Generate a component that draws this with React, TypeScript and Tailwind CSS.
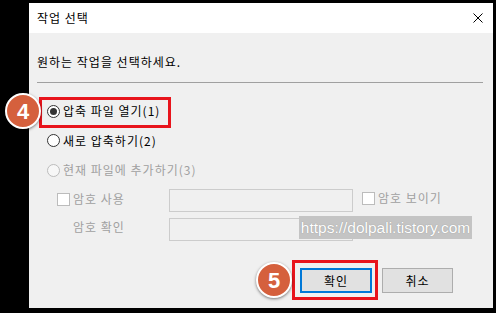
import React from "react";

const Radio: React.FC<{ checked?: boolean; disabled?: boolean }> = ({
  checked,
  disabled,
}) => (
  <span
    className={`w-[13px] h-[13px] rounded-full border flex items-center justify-center shrink-0 ${
      disabled ? "border-[#bcbcbc] bg-[#f7f7f7]" : "border-[#333333] bg-white"
    }`}
  >
    {checked && <span className="w-[7px] h-[7px] rounded-full bg-[#333333]" />}
  </span>
);

const Check: React.FC = () => (
  <span className="w-[13px] h-[13px] border border-[#bcbcbc] bg-white shrink-0" />
);

const Badge: React.FC<{ n: string; className: string }> = ({ n, className }) => (
  <div
    className={`absolute w-[36px] h-[36px] rounded-full bg-[#d5603d] border-[2px] border-white shadow-[0_1px_3px_rgba(0,0,0,0.5)] flex items-center justify-center text-white font-bold text-[22px] tracking-normal font-['Liberation_Sans',Arial,sans-serif] ${className}`}
  >
    {n}
  </div>
);

const App: React.FC = () => {
  return (
    <div className="relative w-[496px] h-[313px] bg-black pt-[3px] pl-[29px] overflow-hidden font-['Noto_Sans_CJK_KR',sans-serif] text-[12px] tracking-[1px] text-black">
      <div className="w-[464px] h-[305px] flex flex-col bg-[#f0f0f0]">
        {/* title bar */}
        <div className="h-[30px] bg-white flex items-center justify-between pl-[8px] pr-[10px]">
          <span className="leading-[16px]">작업 선택</span>
          <svg width="10" height="10" viewBox="0 0 10 10" className="mt-[-1px]">
            <path d="M0.5 0.5 L9.5 9.5 M9.5 0.5 L0.5 9.5" stroke="#000" strokeWidth="1" />
          </svg>
        </div>

        <div className="flex-1 flex flex-col pl-[8px] pr-[10px]">
          <div className="mt-[21px] h-[16px] leading-[16px]">원하는 작업을 선택하세요.</div>
          <div className="mt-[12px] h-px bg-[#a0a0a0]" />

          <div className="mt-[13px] pl-[10px] flex flex-col">
            <div className="h-[30px] flex items-center gap-[3px]">
              <Radio checked />
              <span className="leading-[16px]">압축 파일 열기(1)</span>
            </div>
            <div className="h-[29px] flex items-center gap-[3px]">
              <Radio />
              <span className="leading-[16px]">새로 압축하기(2)</span>
            </div>
            <div className="h-[30px] flex items-center gap-[3px] text-[#a0a0a0]">
              <Radio disabled />
              <span className="leading-[16px]">현재 파일에 추가하기(3)</span>
            </div>
          </div>

          <div className="mt-[4px] pl-[20px] flex flex-col gap-[6px] text-[#a0a0a0]">
            <div className="h-[23px] flex items-center">
              <div className="w-[112px] flex items-center gap-[3px] mt-[-3px]">
                <Check />
                <span className="leading-[16px]">암호 사용</span>
              </div>
              <div className="w-[184px] h-[23px] border border-[#cccccc] bg-[#f0f0f0]" />
              <div className="ml-[9px] flex items-center gap-[3px] mt-[-5px]">
                <Check />
                <span className="leading-[16px]">암호 보이기</span>
              </div>
            </div>
            <div className="h-[23px] flex items-center">
              <div className="w-[112px] pl-[16px] mt-[-6px]">
                <span className="leading-[16px]">암호 확인</span>
              </div>
              <div className="w-[184px] h-[23px] border border-[#cccccc] bg-[#f0f0f0]" />
            </div>
          </div>

          <div className="mt-[27px] flex justify-end gap-[10px] pr-[30px]">
            <button className="w-[72px] h-[25px] border-[2px] border-[#0078d7] bg-[#e1e1e1] flex items-center justify-center leading-[16px]">
              확인
            </button>
            <button className="w-[71px] h-[25px] border border-[#adadad] bg-[#e1e1e1] flex items-center justify-center leading-[16px]">
              취소
            </button>
          </div>
        </div>
      </div>

      {/* annotations */}
      <div className="absolute left-[39px] top-[97px] w-[132px] h-[31px] border-[3px] border-[#e8141c]" />
      <div className="absolute left-[292px] top-[260px] w-[86px] h-[40px] border-[3px] border-[#e8141c]" />
      <Badge n="4" className="left-[5px] top-[93px]" />
      <Badge n="5" className="left-[256px] top-[262px]" />
      <div className="absolute left-[299px] top-[216px] w-[173px] h-[23px] bg-[#c4c4c4] flex items-center justify-center text-white text-[15.5px] tracking-normal leading-[23px] font-['Liberation_Sans',Arial,sans-serif] [text-shadow:0_0_1px_#8a8a8a]">
        https://dolpali.tistory.com
      </div>
    </div>
  );
};

export default App;
